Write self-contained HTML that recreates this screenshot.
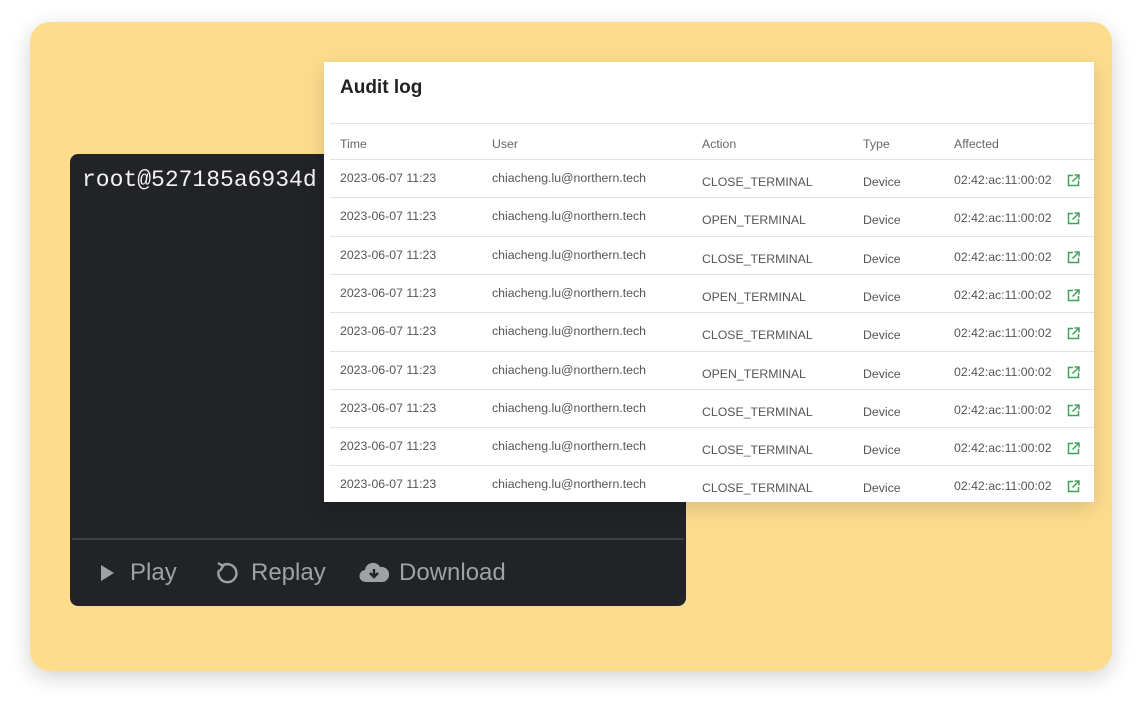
<!DOCTYPE html>
<html><head><meta charset="utf-8"><style>
*{margin:0;padding:0;box-sizing:border-box}
body{width:1142px;height:710px;background:#fff;position:relative;overflow:hidden;font-family:"Liberation Sans",sans-serif}
.card{position:absolute;left:30px;top:22px;width:1082px;height:649px;background:#fddd8d;border-radius:20px;box-shadow:0 6px 22px rgba(0,0,0,.18)}
.term{position:absolute;left:70px;top:154px;width:616px;height:452px;background:#212327;border-radius:8px;overflow:hidden}
.term .prompt{position:absolute;left:12px;top:13px;font-family:"Liberation Mono",monospace;font-size:23px;color:#f2f2f2;white-space:nowrap}
.term .div{position:absolute;left:2px;right:2px;top:384px;height:2px;background:#3c3f44}
.btn{position:absolute;top:405px;font-size:24px;color:#9fa1a5;display:flex;align-items:center}
.panel{position:absolute;left:324px;top:62px;width:770px;height:440px;background:#fff;box-shadow:0 6px 20px rgba(0,0,0,.15)}
.title{position:absolute;left:16px;top:15px;font-size:19px;font-weight:bold;color:#222}
.hl{position:absolute;left:6px;right:0;height:1px;background:#e3e3e3}
.t{position:absolute;font-size:12.3px;color:#555;white-space:nowrap}
.h{color:#666}
.ic{position:absolute;width:13px;height:13px}
</style></head><body>
<div class="card"></div>
<div class="term">
<div class="prompt">root@527185a6934d</div>
<div class="div"></div>
<div class="btn" style="left:30px"><svg width="16" height="20" viewBox="0 0 16 20"><path d="M1 2 L14 10 L1 18Z" fill="#9fa1a5"/></svg><span style="margin-left:14px">Play</span></div>
<div class="btn" style="left:144px"><svg width="24" height="26" viewBox="0 0 24 26"><path d="M8 6 A9 9 0 1 1 5 10" fill="none" stroke="#9fa1a5" stroke-width="2.4"/><path d="M4 3 L9 6 L6 11" fill="none" stroke="#9fa1a5" stroke-width="2.4"/></svg><span style="margin-left:13px">Replay</span></div>
<div class="btn" style="left:289px"><svg width="30" height="22" viewBox="0 0 30 22"><path d="M7 20 A6 6 0 0 1 6 8 A8 8 0 0 1 21 5 A7 7 0 0 1 24 20Z" fill="#9fa1a5"/><path d="M15 7 V15 M11 11 L15 15 L19 11" stroke="#212327" stroke-width="2.4" fill="none"/></svg><span style="margin-left:10px">Download</span></div>
</div>
<div class="panel">
<div class="title">Audit log</div>
<div class="hl" style="top:61px"></div>
<div class="t h" style="left:16px;top:75px">Time</div>
<div class="t h" style="left:168px;top:75px">User</div>
<div class="t h" style="left:378px;top:75px">Action</div>
<div class="t h" style="left:539px;top:75px">Type</div>
<div class="t h" style="left:630px;top:75px">Affected</div>
<div id="rows"></div>
</div>
<script>
var acts=["CLOSE_TERMINAL","OPEN_TERMINAL","CLOSE_TERMINAL","OPEN_TERMINAL","CLOSE_TERMINAL","OPEN_TERMINAL","CLOSE_TERMINAL","CLOSE_TERMINAL","CLOSE_TERMINAL"];
var h="";
for(var i=0;i<9;i++){var y=97+i*38.3;
h+='<div class="hl" style="top:'+y+'px"></div>';
h+='<div class="t" style="left:16px;top:'+(y+12)+'px">2023-06-07 11:23</div>';
h+='<div class="t" style="left:168px;top:'+(y+12)+'px">chiacheng.lu@northern.tech</div>';
h+='<div class="t" style="left:378px;top:'+(y+16)+'px">'+acts[i]+'</div>';
h+='<div class="t" style="left:539px;top:'+(y+16)+'px">Device</div>';
h+='<div class="t" style="left:630px;top:'+(y+14)+'px">02:42:ac:11:00:02</div>';
h+='<svg class="ic" style="left:743px;top:'+(y+15)+'px" viewBox="0 0 13 13"><path d="M6 1.5H1.5V11.5H11.5V7" fill="none" stroke="#3fa35a" stroke-width="1.5"/><path d="M7.5 1H12V5.5M12 1L5.5 7.5" fill="none" stroke="#3fa35a" stroke-width="1.5"/></svg>';}
document.getElementById("rows").innerHTML=h;
</script>
</body></html>
